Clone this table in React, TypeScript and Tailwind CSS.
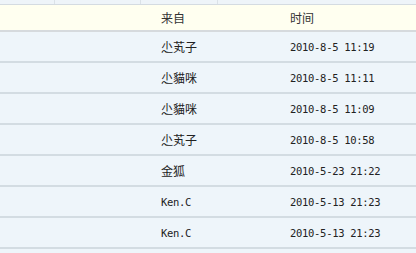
import React from "react";

const rows = [
  ["尐芄子", "2010-8-5 11:19"],
  ["尐貓咪", "2010-8-5 11:11"],
  ["尐貓咪", "2010-8-5 11:09"],
  ["尐芄子", "2010-8-5 10:58"],
  ["金狐", "2010-5-23 21:22"],
  ["Ken.C", "2010-5-13 21:23"],
  ["Ken.C", "2010-5-13 21:23"],
];

const isLatin = (s: string) => /^[\x00-\x7f]+$/.test(s);

function Cell({ text }: { text: string }) {
  return isLatin(text) ? (
    <span
      className="text-[10.5px] tracking-[-0.3px]"
      style={{ fontFamily: '"DejaVu Sans Mono", "Liberation Mono", monospace' }}
    >
      {text}
    </span>
  ) : (
    <span>{text}</span>
  );
}

export default function App() {
  return (
    <div
      className="w-[416px] h-[253px] overflow-hidden bg-[#eef5fa] text-[12px] text-[#222]"
      style={{ fontFamily: '"Noto Sans CJK SC", "Liberation Sans", sans-serif' }}
    >
      <div className="h-[5px] flex border-b border-[#d4dbe1] bg-[#eef4f9]">
        <div className="w-[55px] border-r border-[#dbe2e8]" />
        <div className="w-[86px] border-r border-[#dbe2e8]" />
        <div className="w-[77px] border-r border-[#dbe2e8]" />
      </div>
      <div className="h-[27px] flex items-center bg-[#fffff0] border-b-2 border-[#d6dadd] text-[#333]">
        <div className="w-[161px]" />
        <div className="w-[129px]">来自</div>
        <div>时间</div>
      </div>
      {rows.map((r, i) => (
        <div
          key={i}
          className="h-[31px] flex items-center border-b-2 border-[#d3dce2] bg-[#eef5fa]"
        >
          <div className="w-[161px]" />
          <div className="w-[129px]">
            <Cell text={r[0]} />
          </div>
          <div>
            <Cell text={r[1]} />
          </div>
        </div>
      ))}
    </div>
  );
}
